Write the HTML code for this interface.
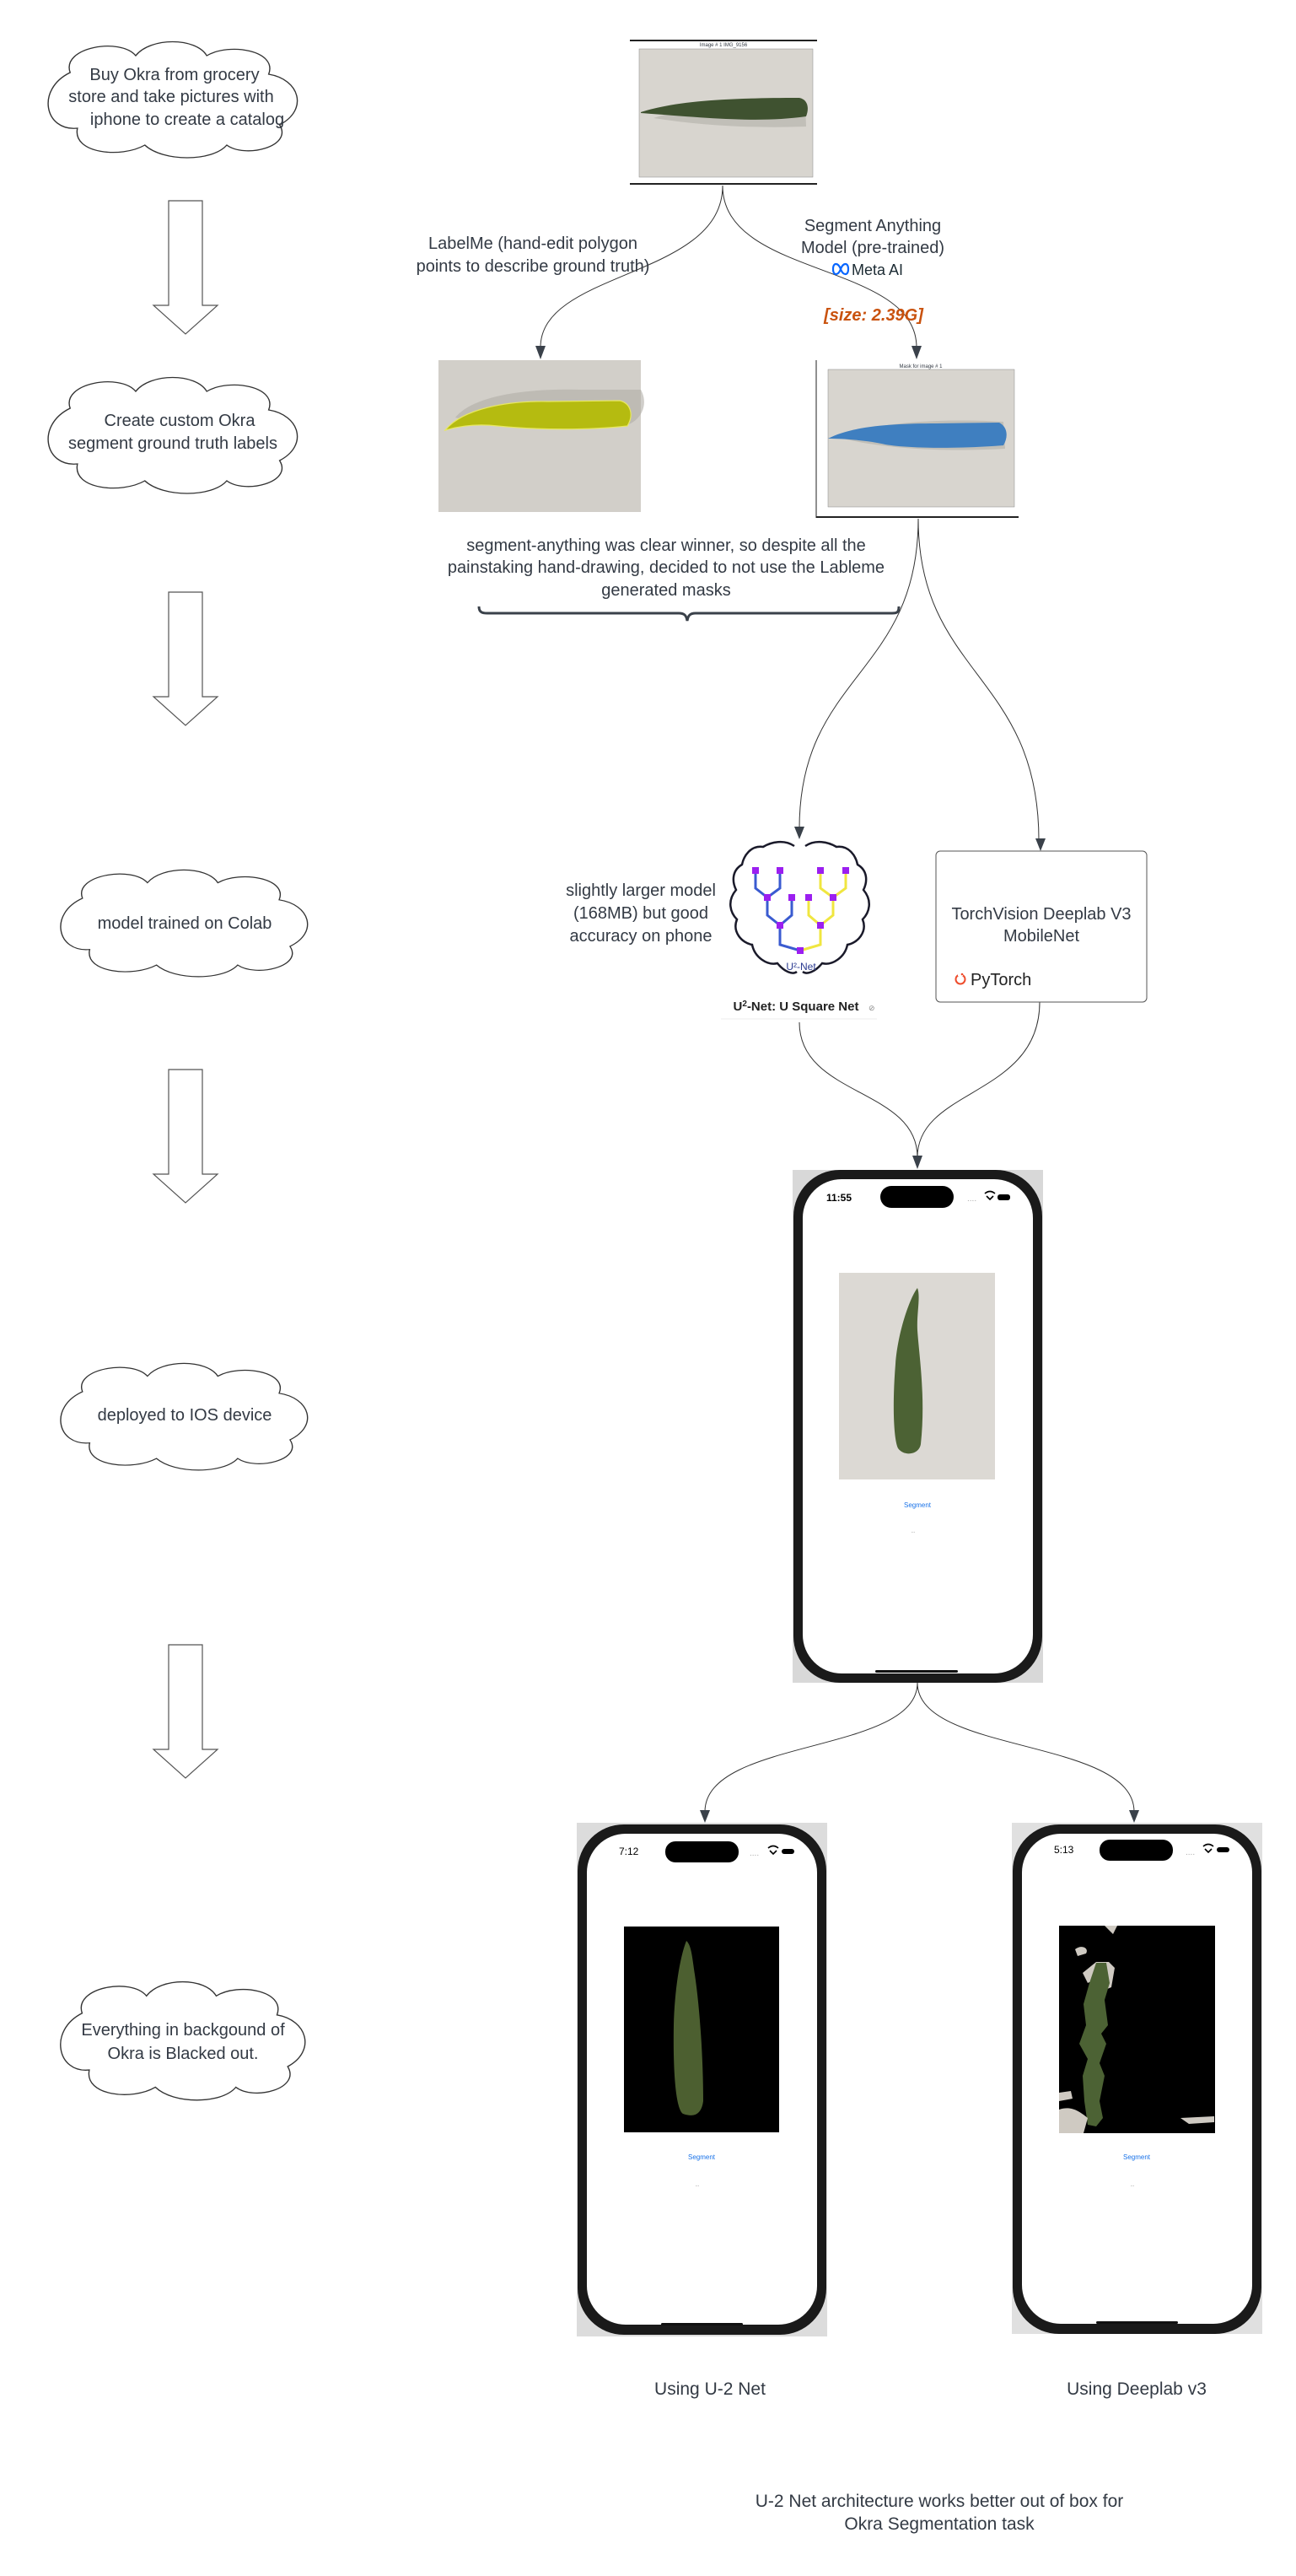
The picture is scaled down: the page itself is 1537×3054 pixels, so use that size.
<!DOCTYPE html>
<html><head><meta charset="utf-8"><style>
html,body{margin:0;padding:0;background:#fff;}
svg{display:block;}
text{font-family:"Liberation Sans",Arial,sans-serif;fill:#333a44;}
</style></head><body>
<svg width="1537" height="3054" viewBox="0 0 1537 3054" xmlns="http://www.w3.org/2000/svg">
<defs>
<path id="cloud" d="M40,38 C30,8 95,-4 112,18 C128,-4 178,-4 190,18 C215,2 268,12 258,40 C292,46 302,82 270,100 C285,126 232,140 212,124 C196,144 142,144 122,124 C96,140 42,134 48,104 C12,108 2,58 40,38 Z"/>
<path id="barrow" d="M0,0 L40,0 L40,124 L58,124 L20,158 L-18,124 L0,124 Z"/>
</defs>

<g fill="#fff" stroke="#333" stroke-width="1.3">
<use href="#cloud" transform="translate(40,48) scale(1.08,1.0)"/>
<use href="#cloud" transform="translate(40,446) scale(1.08,1.0)"/>
<use href="#cloud" transform="translate(55,1030) scale(1.07,0.92)"/>
<use href="#cloud" transform="translate(55,1615) scale(1.07,0.92)"/>
<use href="#cloud" transform="translate(55,2348) scale(1.06,1.02)"/>
</g>
<g font-size="20" text-anchor="middle">
<text x="207" y="95">Buy Okra from grocery</text>
<text x="203" y="121">store and take pictures with</text>
<text x="222" y="148">iphone to create a catalog</text>
<text x="213" y="505">Create custom Okra</text>
<text x="205" y="532">segment ground truth labels</text>
<text x="219" y="1101">model trained on Colab</text>
<text x="219" y="1684">deployed to IOS device</text>
<text x="217" y="2413">Everything in backgound of</text>
<text x="217" y="2441">Okra is Blacked out.</text>
</g>

<g fill="#fff" stroke="#555" stroke-width="1.2">
<use href="#barrow" transform="translate(200,238)"/>
<use href="#barrow" transform="translate(200,702)"/>
<use href="#barrow" transform="translate(200,1268)"/>
<use href="#barrow" transform="translate(200,1950)"/>
</g>

<rect x="747" y="47" width="222" height="172" fill="#fff"/>
<line x1="747" y1="48" x2="969" y2="48" stroke="#222" stroke-width="2"/>
<line x1="747" y1="218" x2="969" y2="218" stroke="#222" stroke-width="2"/>
<text x="858" y="55" font-size="6" text-anchor="middle">Image # 1 IMG_9156</text>
<rect x="758" y="58" width="206" height="152" fill="#d8d5cf" stroke="#888" stroke-width="0.5"/>
<path d="M775,140 C820,125 880,118 955,124 L956,150 C900,152 840,150 775,140Z" fill="#b8b5ae" opacity="0.7"/>
<path d="M760,133 C800,120 860,116 948,116 C958,118 960,128 956,138 C900,146 840,140 760,134Z" fill="#3f5230"/>

<g fill="none" stroke="#333" stroke-width="1">
<path d="M857,220 C857,330 641,320 641,412"/>
<path d="M857,220 C857,330 1087,310 1087,412"/>
<path d="M1089,615 C1089,800 948,800 948,982"/>
<path d="M1089,615 C1089,800 1232,800 1232,996"/>
<path d="M948,1212 C948,1300 1088,1290 1088,1372"/>
<path d="M1233,1188 C1233,1300 1088,1290 1088,1372"/>
<path d="M1088,1995 C1088,2080 836,2060 836,2148"/>
<path d="M1088,1995 C1088,2080 1345,2060 1345,2148"/>
</g>
<g fill="#3a414a">
<polygon points="635,410 647,410 641,426"/>
<polygon points="1081,410 1093,410 1087,426"/>
<polygon points="942,980 954,980 948,995"/>
<polygon points="1228,994 1240,994 1234,1009"/>
<polygon points="1082,1370 1094,1370 1088,1386"/>
<polygon points="830,2146 842,2146 836,2161"/>
<polygon points="1339,2146 1351,2146 1345,2161"/>
</g>

<g font-size="20" text-anchor="middle">
<text x="632" y="295">LabelMe (hand-edit polygon</text>
<text x="632" y="322">points to describe ground truth)</text>
<text x="1035" y="274">Segment Anything</text>
<text x="1035" y="300">Model (pre-trained)</text>
</g>
<g transform="translate(986,312)">
<path d="M2,7 C2,-1 8,-1 11,7 C14,15 20,15 20,7 C20,-1 14,-1 11,7 C8,15 2,15 2,7Z" fill="none" stroke="#0866ff" stroke-width="2.2"/>
<text x="24" y="14" font-size="18" style="fill:#1c2b33">Meta AI</text>
</g>
<text x="1036" y="380" font-size="20" font-weight="bold" font-style="italic" text-anchor="middle" style="fill:#c9520e">[size: 2.39G]</text>

<rect x="520" y="427" width="240" height="180" fill="#d2cfc9"/>
<path d="M540,495 C560,470 620,460 690,462 L760,462 C770,480 760,500 740,505 C700,510 620,505 560,500Z" fill="#b0ada6" opacity="0.6"/>
<path d="M528,510 C548,485 600,475 650,476 L735,475 C748,478 752,492 744,505 C700,510 640,510 590,505 C565,502 545,505 528,510Z" fill="#b5bb10" stroke="#e8e860" stroke-width="1.2"/>

<rect x="968" y="427" width="240" height="188" fill="#fff"/>
<line x1="968" y1="427" x2="968" y2="614" stroke="#222" stroke-width="1"/>
<line x1="968" y1="613" x2="1208" y2="613" stroke="#222" stroke-width="2"/>
<text x="1092" y="436" font-size="6" text-anchor="middle">Mask for image # 1</text>
<rect x="982" y="438" width="221" height="163" fill="#d8d5cf" stroke="#888" stroke-width="0.5"/>
<path d="M1000,515 C1050,500 1120,496 1190,500 L1192,532 C1120,536 1050,532 1000,520Z" fill="#b8b5ae" opacity="0.7"/>
<path d="M982,520 C1010,505 1060,502 1110,502 L1185,501 C1195,506 1196,518 1190,528 C1140,532 1080,532 1050,527 C1030,522 1000,520 982,520Z" fill="#3f7fc0"/>

<g font-size="20" text-anchor="middle">
<text x="790" y="653">segment-anything was clear winner, so despite all the</text>
<text x="790" y="679">painstaking hand-drawing, decided to not use the Lableme</text>
<text x="790" y="706">generated masks</text>
</g>
<path d="M568,719 C568,726 572,727 578,727 L805,727 C812,727 814,730 815,736 C816,730 818,727 825,727 L1058,727 C1064,727 1066,726 1066,719" fill="none" stroke="#3a414a" stroke-width="3"/>

<g font-size="20" text-anchor="middle">
<text x="760" y="1062">slightly larger model</text>
<text x="760" y="1089">(168MB) but good</text>
<text x="760" y="1116">accuracy on phone</text>
</g>
<g transform="translate(860,990)" fill="none">
<path d="M82,13 C70,5 55,8 45,14 C30,12 22,25 20,35 C8,42 8,55 13,65 C2,78 6,92 14,100 C8,115 20,128 32,130 C35,145 50,155 62,152 C70,162 80,166 85,162" stroke="#1a1a2a" stroke-width="2.5"/>
<path d="M95,13 C107,5 122,8 132,14 C147,12 155,25 157,35 C169,42 169,55 164,65 C175,78 171,92 163,100 C169,115 157,128 145,130 C142,145 127,155 115,152 C107,162 97,166 92,162" stroke="#1a1a2a" stroke-width="2.5"/>
<g stroke="#3a5bd0" stroke-width="3">
<path d="M36,42 V63 L50,74 M65,42 V63 L50,74 M50,74 V95 L65,107 M79,74 V95 L65,107 M65,107 V130 L89,137"/>
</g>
<g stroke="#f0e640" stroke-width="3">
<path d="M113,42 V63 L128,74 M143,42 V63 L128,74 M99,74 V95 L113,107 M128,74 V95 L113,107 M113,107 V130 L89,137"/>
</g>
<g fill="#9b1ff0">
<rect x="32" y="38" width="8" height="8"/><rect x="61" y="38" width="8" height="8"/><rect x="109" y="38" width="8" height="8"/><rect x="139" y="38" width="8" height="8"/>
<rect x="46" y="70" width="8" height="8"/><rect x="75" y="70" width="8" height="8"/><rect x="95" y="70" width="8" height="8"/><rect x="124" y="70" width="8" height="8"/>
<rect x="61" y="103" width="8" height="8"/><rect x="109" y="103" width="8" height="8"/><rect x="85" y="133" width="8" height="8"/>
</g>
<text x="90" y="160" font-size="12" text-anchor="middle" style="fill:#2a3a90">U²-Net</text>
</g>
<text x="944" y="1198" font-size="15" font-weight="bold" text-anchor="middle" style="fill:#222">U<tspan font-size="10" dy="-5">2</tspan><tspan dy="5">-Net: U Square Net</tspan></text>
<text x="1030" y="1198" font-size="9" style="fill:#888">⊘</text>
<line x1="855" y1="1208" x2="1040" y2="1208" stroke="#eee"/>

<rect x="1110" y="1009" width="250" height="179" rx="5" fill="#fff" stroke="#555" stroke-width="1"/>
<g font-size="20" text-anchor="middle">
<text x="1235" y="1090">TorchVision Deeplab V3</text>
<text x="1235" y="1116">MobileNet</text>
</g>
<circle cx="1139" cy="1161" r="5.5" fill="none" stroke="#ee4c2c" stroke-width="2"/>
<rect x="1136" y="1152" width="6" height="5" fill="#fff"/>
<circle cx="1141" cy="1155" r="1.3" fill="#ee4c2c"/>
<text x="1151" y="1168" font-size="20" style="fill:#222">PyTorch</text>

<g transform="translate(940,1387)">
<rect x="0" y="0" width="297" height="608" fill="#d8d8d8"/>
<rect x="1" y="0" width="295" height="608" rx="55" fill="#1a1a1a"/>
<rect x="12" y="11" width="273" height="586" rx="46" fill="#fff"/>
<rect x="104" y="19" width="87" height="26" rx="13" fill="#000"/>
<text x="40" y="37" font-size="12" font-weight="bold" style="fill:#000">11:55</text>
<text x="207" y="37" font-size="10" style="fill:#aaa">....</text>
<path d="M230,31 l4,4 l4,-4 M228,28 q6,-5 12,0" stroke="#000" stroke-width="1.6" fill="none"/>
<rect x="243" y="29" width="15" height="7" rx="3" fill="#000"/>
<rect x="55" y="122" width="185" height="245" fill="#dcd9d4"/>
<path d="M148,140 C140,150 125,190 122,230 C118,280 120,320 125,330 C132,340 150,338 152,325 C158,270 150,220 148,190 C147,170 152,150 148,140Z" fill="#4c6234"/>
<text x="148" y="400" font-size="8" text-anchor="middle" style="fill:#1a73e8">Segment</text>
<text x="143" y="430" font-size="6" text-anchor="middle" style="fill:#888">...</text>
<rect x="98" y="593" width="98" height="3" rx="1.5" fill="#111"/>
</g>

<g transform="translate(684,2161)">
<rect x="0" y="0" width="297" height="609" fill="#dcdcdc"/>
<rect x="1" y="2" width="295" height="605" rx="55" fill="#1a1a1a"/>
<rect x="12" y="13" width="273" height="582" rx="46" fill="#fff"/>
<rect x="105" y="22" width="87" height="25" rx="12" fill="#000"/>
<text x="50" y="38" font-size="12" style="fill:#000">7:12</text>
<text x="205" y="39" font-size="10" style="fill:#aaa">....</text>
<path d="M229,33 l4,4 l4,-4 M227,30 q6,-5 12,0" stroke="#000" stroke-width="1.6" fill="none"/>
<rect x="243" y="31" width="15" height="6" rx="3" fill="#000"/>
<rect x="56" y="123" width="184" height="244" fill="#000"/>
<path d="M130,140 C122,160 116,200 115,240 C114,300 118,340 126,345 C140,350 148,345 150,330 C150,280 146,220 140,180 C137,160 136,145 130,140Z" fill="#4c5f30"/>
<text x="148" y="399" font-size="8" text-anchor="middle" style="fill:#1a73e8">Segment</text>
<text x="143" y="431" font-size="6" text-anchor="middle" style="fill:#888">...</text>
<rect x="100" y="593" width="97" height="3" rx="1.5" fill="#111"/>
</g>

<g transform="translate(1200,2161)">
<rect x="0" y="0" width="297" height="606" fill="#e0e0e0"/>
<rect x="1" y="2" width="295" height="604" rx="55" fill="#1a1a1a"/>
<rect x="12" y="13" width="273" height="581" rx="46" fill="#fff"/>
<rect x="104" y="20" width="87" height="25" rx="12" fill="#000"/>
<text x="50" y="36" font-size="12" style="fill:#000">5:13</text>
<text x="206" y="38" font-size="10" style="fill:#aaa">....</text>
<path d="M229,31 l4,4 l4,-4 M227,28 q6,-5 12,0" stroke="#000" stroke-width="1.6" fill="none"/>
<rect x="243" y="29" width="15" height="6" rx="3" fill="#000"/>
<rect x="56" y="122" width="185" height="246" fill="#000"/>
<path d="M100,165 L115,165 L122,172 L118,195 L106,200 L100,185 L90,190 L84,178Z" fill="#cfcac2"/>
<path d="M100,166 L112,166 L116,190 L110,210 L114,240 L106,250 L112,262 L104,285 L110,300 L104,330 L108,350 L100,360 L90,358 L86,330 L84,300 L90,280 L80,262 L88,240 L85,215 L92,190Z" fill="#4c6234"/>
<path d="M56,340 C70,335 80,342 90,350 L85,368 L56,368Z M56,320 L70,318 L72,327 L56,330Z M200,350 L240,348 L240,355 L210,357Z M75,150 C82,144 92,148 88,155 L78,158Z M110,122 L125,122 L120,132Z" fill="#cfcac2"/>
<text x="148" y="399" font-size="8" text-anchor="middle" style="fill:#1a73e8">Segment</text>
<text x="143" y="431" font-size="6" text-anchor="middle" style="fill:#888">...</text>
<rect x="100" y="591" width="97" height="3" rx="1.5" fill="#111"/>
</g>

<g font-size="21" text-anchor="middle">
<text x="842" y="2839">Using U-2 Net</text>
<text x="1348" y="2839">Using Deeplab v3</text>
<text x="1114" y="2972">U-2 Net architecture works better  out of box for</text>
<text x="1114" y="2999">Okra Segmentation task</text>
</g>
</svg>
</body></html>
